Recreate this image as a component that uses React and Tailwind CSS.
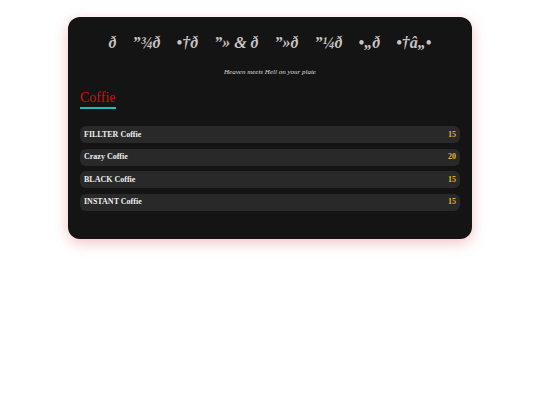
const items = [
  { name: 'FILLTER Coffie', price: 15 },
  { name: 'Crazy Coffie', price: 20 },
  { name: 'BLACK Coffie', price: 15 },
  { name: 'INSTANT Coffie', price: 15 },
];

export default function App() {
  return (
    <div className="min-h-screen bg-white pt-[17px]" style={{ fontFamily: '"Liberation Serif", "Times New Roman", serif' }}>
      <div className="mx-auto w-[404px] h-[222px] rounded-xl bg-[#141414] px-3 pt-[15px] shadow-[0_4px_14px_rgba(220,80,80,0.35)]">
        <h1 className="text-center text-[16px] leading-[22px] font-bold italic text-[#c9c3c3] whitespace-pre">
          {'ð    ”¾ð    •†ð    ”» & ð    ”»ð    ”¼ð    •„ð    •†â„•'}
        </h1>
        <p className="mt-[13px] text-center text-[7px] leading-[10px] italic text-[#dddddd]">Heaven meets Hell on your plate</p>

        <div className="mt-[8px]">
          <h2 className="inline-block text-[14px] leading-[16px] text-[#d40f0f] border-b-2 border-[#2ab7b7] pb-[1px]">Coffie</h2>
        </div>

        <div className="mt-[17px] flex flex-col gap-[5.5px]">
          {items.map((item) => (
            <div key={item.name} className="flex h-[17px] items-center justify-between rounded-md bg-[#292929] px-[4px]">
              <span className="text-[8px] font-bold text-[#eeeeee]">{item.name}</span>
              <span className="text-[8px] font-bold text-[#e0b52a]">{item.price}</span>
            </div>
          ))}
        </div>
      </div>
    </div>
  );
}
